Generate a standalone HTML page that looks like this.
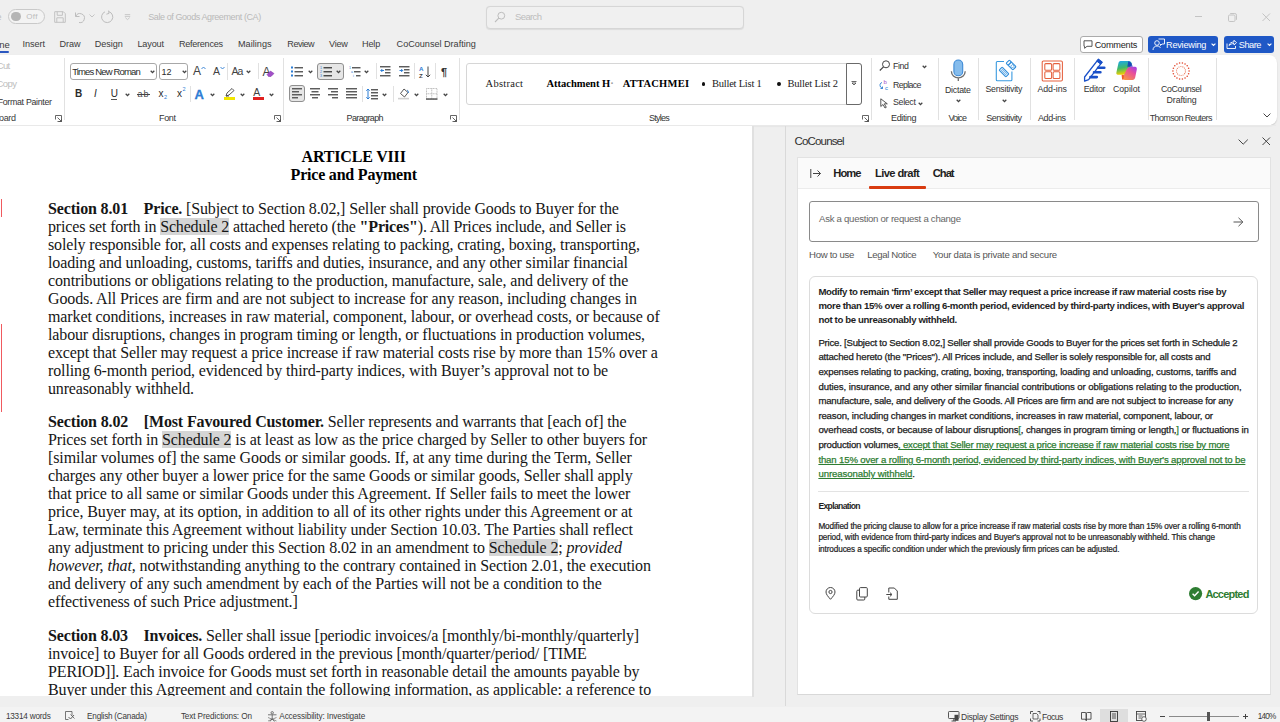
<!DOCTYPE html>
<html><head><meta charset="utf-8"><style>*{margin:0;padding:0;box-sizing:border-box}
html,body{width:1280px;height:722px;overflow:hidden;background:#efefef;font-family:"Liberation Sans",sans-serif;color:#242424;position:relative}
.a{position:absolute}
.t{position:absolute;white-space:nowrap;line-height:1}
svg.a{overflow:visible}
.hl{background:#d5d5d5}
</style></head><body>
<div class="a" style="left:0px;top:0px;width:1280px;height:55px;background:#efefef"></div>
<div class="t " style="left:-3.50px;top:12.98px;font-size:9.00px;color:#bdbdbd;">e</div>
<div class="a" style="left:7.5px;top:9px;width:37px;height:14.5px;border:1.2px solid #c9c9c9;border-radius:8px;background:#f3f3f3"></div>
<div class="a" style="left:11.3px;top:11.5px;width:9.8px;height:9.8px;border-radius:50%;background:#b5b5b5"></div>
<div class="t " style="letter-spacing:0.334px;left:26.30px;top:13.23px;font-size:8.00px;color:#bcbcbc;">Off</div>
<svg class="a" style="left:54px;top:11px;" width="12" height="12" viewBox="0 0 12 12"><path d="M.7 .7h8.6l2 2v8.6H.7z" fill="none" stroke="#c2c2c2" stroke-width="1"/><path d="M3.2 .7v3.6h5.2V.7M2.8 11.3V6.8h6.4v4.5" fill="none" stroke="#c2c2c2" stroke-width="1"/></svg>
<svg class="a" style="left:74px;top:11px;" width="12" height="12" viewBox="0 0 12 12"><path d="M1.5 1.5v4h4 M1.8 5.3A4.5 4.5 0 1 1 5 11.5" fill="none" stroke="#bdbdbd" stroke-width="1"/></svg>
<svg class="a" style="left:89px;top:14px;" width="6" height="4" viewBox="0 0 6 4"><path d="M.5 .5l2.5 2.5 2.5-2.5" fill="none" stroke="#c4c4c4" stroke-width="1"/></svg>
<svg class="a" style="left:100px;top:10px;" width="14" height="14" viewBox="0 0 14 14"><path d="M5 1.8A5.6 5.6 0 1 0 8.8 1.6" fill="none" stroke="#bdbdbd" stroke-width="1"/><path d="M8.6 .6l.4 2.8-2.6.8" fill="none" stroke="#bdbdbd" stroke-width="1"/></svg>
<svg class="a" style="left:124px;top:13.5px;" width="7" height="6" viewBox="0 0 7 6"><path d="M.8 .6h5.4M.8 2.4h5.4M1.3 3.6l2.2 2 2.2-2" fill="none" stroke="#c4c4c4" stroke-width=".9"/></svg>
<div class="t " style="letter-spacing:-0.410px;left:148.20px;top:12.98px;font-size:9.00px;color:#b9b9b9;">Sale of Goods Agreement (CA)</div>
<div class="a" style="left:485.5px;top:5.5px;width:258px;height:23px;border:1px solid #d6d6d6;border-radius:4px;background:#f0f0f0;box-shadow:0 .5px 1px rgba(0,0,0,.08)"></div>
<svg class="a" style="left:494px;top:10.5px;" width="12" height="12" viewBox="0 0 12 12"><circle cx="7.3" cy="4.7" r="3.4" fill="none" stroke="#bdbdbd" stroke-width="1"/><path d="M4.8 7.2L1 11" stroke="#bdbdbd" stroke-width="1.1"/></svg>
<div class="t " style="letter-spacing:-0.622px;left:515.00px;top:12.46px;font-size:9.50px;color:#bdbdbd;">Search</div>
<div class="a" style="left:1194.5px;top:16px;width:7.5px;height:1px;background:#c4c4c4"></div>
<svg class="a" style="left:1227.5px;top:12.5px;" width="9" height="9" viewBox="0 0 9 9"><rect x=".5" y="2" width="6.5" height="6.5" rx="1.2" fill="none" stroke="#c4c4c4"/><path d="M2.2 .5h4.6a1.7 1.7 0 0 1 1.7 1.7v4.6" fill="none" stroke="#c4c4c4"/></svg>
<svg class="a" style="left:1261.5px;top:12.5px;" width="8.5" height="8.5" viewBox="0 0 8.5 8.5"><path d="M.5 .5l7.5 7.5M8 .5L.5 8" stroke="#c4c4c4" stroke-width="1"/></svg>
<div class="t " style="letter-spacing:-0.050px;left:22.50px;top:40.10px;font-size:9.10px;color:#3b3b3b;">Insert</div>
<div class="t " style="letter-spacing:-0.078px;left:59.60px;top:40.10px;font-size:9.10px;color:#3b3b3b;">Draw</div>
<div class="t " style="letter-spacing:-0.042px;left:94.70px;top:40.10px;font-size:9.10px;color:#3b3b3b;">Design</div>
<div class="t " style="letter-spacing:-0.142px;left:137.40px;top:40.10px;font-size:9.10px;color:#3b3b3b;">Layout</div>
<div class="t " style="letter-spacing:-0.280px;left:179.00px;top:40.10px;font-size:9.10px;color:#3b3b3b;">References</div>
<div class="t " style="letter-spacing:0.034px;left:238.00px;top:40.10px;font-size:9.10px;color:#3b3b3b;">Mailings</div>
<div class="t " style="letter-spacing:-0.486px;left:287.30px;top:40.10px;font-size:9.10px;color:#3b3b3b;">Review</div>
<div class="t " style="letter-spacing:-0.249px;left:329.00px;top:40.10px;font-size:9.10px;color:#3b3b3b;">View</div>
<div class="t " style="letter-spacing:-0.134px;left:362.00px;top:40.10px;font-size:9.10px;color:#3b3b3b;">Help</div>
<div class="t " style="letter-spacing:-0.009px;left:396.60px;top:40.10px;font-size:9.10px;color:#3b3b3b;">CoCounsel Drafting</div>
<div class="t " style="left:-0.80px;top:39.76px;font-size:9.50px;color:#3b3b3b;">ne</div>
<div class="a" style="left:0px;top:51px;width:8.5px;height:2px;background:#2b57c0;border-radius:0 1px 1px 0"></div>
<div class="a" style="left:1079.5px;top:35.5px;width:63px;height:17px;border:1px solid #ababab;border-radius:3px;background:#fff"></div>
<svg class="a" style="left:1083px;top:40px;" width="10" height="9" viewBox="0 0 10 9"><path d="M1 .8h8v5.5H4L1.6 8.3V6.3H1z" fill="none" stroke="#444" stroke-width=".9"/></svg>
<div class="t " style="letter-spacing:-0.260px;left:1094.70px;top:40.81px;font-size:9.20px;color:#262626;">Comments</div>
<div class="a" style="left:1148.2px;top:35.5px;width:70px;height:17px;border-radius:3px;background:#1f58c6"></div>
<svg class="a" style="left:1151.5px;top:37.5px;" width="13" height="13" viewBox="0 0 13 13"><circle cx="5" cy="5" r="2.3" fill="none" stroke="#fff" stroke-width=".9"/><path d="M1 12c0-2.5 1.8-4 4-4s3 1 3.5 2M6.5 1h6v5H10l-1.5 1.5V6" fill="none" stroke="#fff" stroke-width=".9"/></svg>
<div class="t " style="letter-spacing:-0.249px;left:1166.00px;top:40.81px;font-size:9.20px;color:#fff;">Reviewing</div>
<svg class="a" style="left:1211px;top:43px;" width="5" height="3.5" viewBox="0 0 5 3.5"><path d="M.6 .6l1.9 1.9 1.9-1.9" fill="none" stroke="#fff" stroke-width="1.1"/></svg>
<div class="a" style="left:1224.1px;top:35.5px;width:49.5px;height:17px;border-radius:3px;background:#1f58c6"></div>
<svg class="a" style="left:1226px;top:39px;" width="11" height="10" viewBox="0 0 11 10"><path d="M1 4.5v5h8.5V7 M3 6.5c.5-2.5 2.5-3.5 5-3.5V1.2l2.5 2.5L8 6V4.5c-2 0-3.8.8-5 2z" fill="none" stroke="#fff" stroke-width=".9"/></svg>
<div class="t " style="letter-spacing:-0.483px;left:1238.80px;top:40.81px;font-size:9.20px;color:#fff;">Share</div>
<svg class="a" style="left:1266.8px;top:43px;" width="5" height="3.5" viewBox="0 0 5 3.5"><path d="M.6 .6l1.9 1.9 1.9-1.9" fill="none" stroke="#fff" stroke-width="1.1"/></svg>
<div class="a" style="left:-10px;top:55px;width:1286.5px;height:69.5px;background:#fff;border-radius:8px;box-shadow:0 1px 1.5px rgba(0,0,0,.16)"></div>
<div class="t " style="letter-spacing:-0.698px;left:-3.20px;top:61.46px;font-size:9.50px;color:#bdbdbd;">Cut</div>
<div class="t " style="letter-spacing:-0.562px;left:-3.50px;top:78.96px;font-size:9.50px;color:#bdbdbd;">Copy</div>
<div class="t " style="letter-spacing:-0.299px;left:-2.30px;top:98.45px;font-size:8.80px;color:#333333;">Format Painter</div>
<div class="t " style="letter-spacing:-0.383px;left:-6.50px;top:113.68px;font-size:9.00px;color:#3a3a3a;">Board</div>
<svg class="a" style="left:55px;top:114.5px;" width="7" height="7" viewBox="0 0 7 7"><path d="M.5 4.5V.5h6v6h-4 M2.5 2.5l4 4M4 6.5h2.5V4" fill="none" stroke="#555" stroke-width=".9"/></svg>
<div class="a" style="left:63.5px;top:58.4px;width:1px;height:62.00000000000001px;background:#e1e1e1"></div>
<div class="a" style="left:69.5px;top:63.3px;width:87.5px;height:16.5px;border:1px solid #a8a8a8;border-radius:3px;background:#fff"></div>
<div class="t " style="letter-spacing:-0.852px;left:72.20px;top:67.16px;font-size:9.50px;color:#2a2a2a;">Times New Roman</div>
<svg class="a" style="left:150.3px;top:70.3px;" width="5" height="4" viewBox="0 0 5 4"><path d="M.7 .8l1.8 1.9 1.8-1.9" fill="none" stroke="#444" stroke-width="1.25"/></svg>
<div class="a" style="left:159.2px;top:63.3px;width:29.3px;height:16.5px;border:1px solid #a8a8a8;border-radius:3px;background:#fff"></div>
<div class="t " style="left:161.50px;top:67.58px;font-size:9.00px;color:#2a2a2a;">12</div>
<svg class="a" style="left:181.8px;top:70.3px;" width="5" height="4" viewBox="0 0 5 4"><path d="M.7 .8l1.8 1.9 1.8-1.9" fill="none" stroke="#444" stroke-width="1.25"/></svg>
<div class="t " style="left:193.00px;top:65.14px;font-size:12.00px;color:#424242;">A</div>
<svg class="a" style="left:200.5px;top:66px;" width="5" height="4" viewBox="0 0 5 4"><path d="M.5 3l2-2 2 2" fill="none" stroke="#2b7cd3" stroke-width=".9"/></svg>
<div class="t " style="left:213.00px;top:66.41px;font-size:10.50px;color:#424242;">A</div>
<svg class="a" style="left:219.5px;top:66px;" width="5" height="4" viewBox="0 0 5 4"><path d="M.5 1l2 2 2-2" fill="none" stroke="#2b7cd3" stroke-width=".9"/></svg>
<div class="a" style="left:227px;top:63px;width:1px;height:17px;background:#e1e1e1"></div>
<div class="t " style="letter-spacing:-1.044px;left:231.60px;top:66.41px;font-size:10.50px;color:#424242;">Aa</div>
<svg class="a" style="left:246.0px;top:70.3px;" width="5" height="4" viewBox="0 0 5 4"><path d="M.7 .8l1.8 1.9 1.8-1.9" fill="none" stroke="#444" stroke-width="1.25"/></svg>
<div class="a" style="left:258.4px;top:63px;width:1px;height:16px;background:#e1e1e1"></div>
<div class="t " style="left:262.50px;top:65.64px;font-size:12.00px;color:#424242;">A</div>
<svg class="a" style="left:266px;top:70px;" width="9" height="7" viewBox="0 0 9 7"><path d="M1 4.5L4.5 1 8 3.5 5 6.5H2.5z" fill="#a24fc8" stroke="#7a2fa0" stroke-width=".5"/></svg>
<div class="t " style="left:75.00px;top:88.83px;font-size:10.00px;color:#2a2a2a;font-weight:bold;">B</div>
<div class="t " style="left:94.00px;top:88.83px;font-size:10.00px;color:#2a2a2a;font-style:italic;">I</div>
<div class="t " style="left:110.70px;top:88.83px;font-size:10.00px;color:#2a2a2a;">U</div>
<div class="a" style="left:110.7px;top:98.5px;width:6.5px;height:1px;background:#555"></div>
<svg class="a" style="left:125.0px;top:92.8px;" width="5" height="4" viewBox="0 0 5 4"><path d="M.7 .8l1.8 1.9 1.8-1.9" fill="none" stroke="#444" stroke-width="1.25"/></svg>
<div class="t " style="letter-spacing:0.984px;left:137.50px;top:89.68px;font-size:9.00px;color:#444;">ab</div>
<div class="a" style="left:136.5px;top:93.5px;width:13px;height:1px;background:#444"></div>
<div class="t " style="left:158.50px;top:88.83px;font-size:10.00px;color:#2a2a2a;">x</div>
<div class="t " style="left:164.00px;top:94.84px;font-size:5.50px;color:#2b7cd3;">2</div>
<div class="t " style="left:177.00px;top:88.83px;font-size:10.00px;color:#2a2a2a;">x</div>
<div class="t " style="left:182.50px;top:87.34px;font-size:5.50px;color:#2b7cd3;">2</div>
<div class="a" style="left:189.9px;top:85.6px;width:1px;height:16.0px;background:#e1e1e1"></div>
<div class="t " style="left:194.60px;top:87.80px;font-size:13.00px;color:#2f80d8;font-weight:bold;-webkit-text-stroke:.3px #1f6fc8;">A</div>
<svg class="a" style="left:209.5px;top:92.8px;" width="5" height="4" viewBox="0 0 5 4"><path d="M.7 .8l1.8 1.9 1.8-1.9" fill="none" stroke="#444" stroke-width="1.25"/></svg>
<svg class="a" style="left:223.5px;top:88px;" width="12" height="9" viewBox="0 0 12 9"><path d="M2 8l1-3 5-4.5 2 2L5 7z M2 8h3" fill="none" stroke="#444" stroke-width=".9"/></svg>
<div class="a" style="left:223.6px;top:96.9px;width:11.9px;height:2.8px;background:#f2e600"></div>
<svg class="a" style="left:240.3px;top:92.8px;" width="5" height="4" viewBox="0 0 5 4"><path d="M.7 .8l1.8 1.9 1.8-1.9" fill="none" stroke="#444" stroke-width="1.25"/></svg>
<div class="t " style="left:253.30px;top:87.11px;font-size:10.50px;color:#424242;">A</div>
<div class="a" style="left:252.8px;top:96.9px;width:11.2px;height:2.8px;background:#e02020"></div>
<svg class="a" style="left:269.3px;top:92.8px;" width="5" height="4" viewBox="0 0 5 4"><path d="M.7 .8l1.8 1.9 1.8-1.9" fill="none" stroke="#444" stroke-width="1.25"/></svg>
<div class="t " style="letter-spacing:-0.339px;left:159.00px;top:113.88px;font-size:9.00px;color:#333;">Font</div>
<svg class="a" style="left:274.2px;top:114.5px;" width="7" height="7" viewBox="0 0 7 7"><path d="M.5 4.5V.5h6v6h-4 M2.5 2.5l4 4M4 6.5h2.5V4" fill="none" stroke="#555" stroke-width=".9"/></svg>
<div class="a" style="left:282.5px;top:58.4px;width:1px;height:62.00000000000001px;background:#e1e1e1"></div>
<svg class="a" style="left:291px;top:66px;" width="12" height="11" viewBox="0 0 12 11"><rect x="0" y=".5" width="2" height="2" fill="#2b7cd3"/><rect x="0" y="4.5" width="2" height="2" fill="#2b7cd3"/><rect x="0" y="8.5" width="2" height="2" fill="#2b7cd3"/><rect x="3.5" y="1" width="8.5" height="1.45" fill="#5c5c5c"/><rect x="3.5" y="5" width="8.5" height="1.45" fill="#5c5c5c"/><rect x="3.5" y="9" width="8.5" height="1.45" fill="#5c5c5c"/></svg>
<svg class="a" style="left:308.3px;top:70.3px;" width="5" height="4" viewBox="0 0 5 4"><path d="M.7 .8l1.8 1.9 1.8-1.9" fill="none" stroke="#444" stroke-width="1.25"/></svg>
<div class="a" style="left:317px;top:63px;width:27.2px;height:17px;border:1px solid #8f8f8f;border-radius:3px;background:#e6e6e6"></div>
<svg class="a" style="left:319.5px;top:66px;" width="12" height="11" viewBox="0 0 12 11"><text x="0" y="3" font-size="3.6" fill="#2b7cd3" font-family="Liberation Sans">1</text><text x="0" y="7" font-size="3.6" fill="#2b7cd3" font-family="Liberation Sans">2</text><text x="0" y="11" font-size="3.6" fill="#2b7cd3" font-family="Liberation Sans">3</text><rect x="3.5" y="1" width="8.5" height="1.45" fill="#4a4a4a"/><rect x="3.5" y="5" width="8.5" height="1.45" fill="#4a4a4a"/><rect x="3.5" y="9" width="8.5" height="1.45" fill="#4a4a4a"/></svg>
<svg class="a" style="left:336.1px;top:70.3px;" width="5" height="4" viewBox="0 0 5 4"><path d="M.7 .8l1.8 1.9 1.8-1.9" fill="none" stroke="#444" stroke-width="1.25"/></svg>
<svg class="a" style="left:348.5px;top:66px;" width="12" height="11" viewBox="0 0 12 11"><text x="0" y="3" font-size="3.6" fill="#2b7cd3" font-family="Liberation Sans">1</text><text x="2" y="7" font-size="3.6" fill="#2b7cd3" font-family="Liberation Sans">a</text><text x="4" y="11" font-size="3.6" fill="#2b7cd3" font-family="Liberation Sans">i</text><rect x="3" y="1" width="8.5" height="1.45" fill="#5c5c5c"/><rect x="5" y="5" width="6.5" height="1.45" fill="#5c5c5c"/><rect x="7" y="9" width="4.5" height="1.45" fill="#5c5c5c"/></svg>
<svg class="a" style="left:364.3px;top:70.3px;" width="5" height="4" viewBox="0 0 5 4"><path d="M.7 .8l1.8 1.9 1.8-1.9" fill="none" stroke="#444" stroke-width="1.25"/></svg>
<div class="a" style="left:375.7px;top:63px;width:1px;height:16px;background:#e1e1e1"></div>
<svg class="a" style="left:380.4px;top:66px;" width="11" height="10" viewBox="0 0 11 10"><rect x="0" y="0" width="10.5" height="1.45" fill="#5c5c5c"/><rect x="5" y="3" width="5.5" height="1.45" fill="#5c5c5c"/><rect x="5" y="6" width="5.5" height="1.45" fill="#5c5c5c"/><rect x="0" y="9" width="10.5" height="1.45" fill="#5c5c5c"/><path d="M4 4.5H.8M2.3 3L.8 4.5 2.3 6" fill="none" stroke="#2b7cd3" stroke-width="1"/></svg>
<svg class="a" style="left:398.6px;top:66px;" width="11" height="10" viewBox="0 0 11 10"><rect x="0" y="0" width="10.5" height="1.45" fill="#5c5c5c"/><rect x="5" y="3" width="5.5" height="1.45" fill="#5c5c5c"/><rect x="5" y="6" width="5.5" height="1.45" fill="#5c5c5c"/><rect x="0" y="9" width="10.5" height="1.45" fill="#5c5c5c"/><path d="M.5 4.5h3.2M2.2 3l1.5 1.5L2.2 6" fill="none" stroke="#2b7cd3" stroke-width="1"/></svg>
<div class="a" style="left:414px;top:63px;width:1px;height:16px;background:#e1e1e1"></div>
<svg class="a" style="left:418.5px;top:65.5px;" width="12" height="12" viewBox="0 0 12 12"><text x="0" y="5.2" font-size="6.2" font-weight="bold" fill="#2b7cd3" font-family="Liberation Sans">A</text><text x="0" y="11.8" font-size="6.2" font-weight="bold" fill="#444" font-family="Liberation Sans">Z</text><path d="M9 .5v10.5M6.8 8.8L9 11l2.2-2.2" fill="none" stroke="#444" stroke-width="1"/></svg>
<div class="a" style="left:434.8px;top:63px;width:1px;height:16px;background:#e1e1e1"></div>
<div class="t " style="left:441.00px;top:66.69px;font-size:11.00px;color:#333;font-weight:bold;">¶</div>
<div class="a" style="left:288.5px;top:85.3px;width:16.3px;height:17.2px;border:1px solid #8f8f8f;border-radius:3px;background:#e6e6e6"></div>
<svg class="a" style="left:291.8px;top:87.8px;" width="10.5" height="11" viewBox="0 0 10.5 11"><rect x="0" y="0" width="10" height="1.45" fill="#5c5c5c"/><rect x="0" y="3" width="7" height="1.45" fill="#5c5c5c"/><rect x="0" y="6" width="10" height="1.45" fill="#5c5c5c"/><rect x="0" y="9" width="6" height="1.45" fill="#5c5c5c"/></svg>
<svg class="a" style="left:309.7px;top:87.8px;" width="10.5" height="11" viewBox="0 0 10.5 11"><rect x="0" y="0" width="10" height="1.45" fill="#5c5c5c"/><rect x="1.5" y="3" width="7" height="1.45" fill="#5c5c5c"/><rect x="0" y="6" width="10" height="1.45" fill="#5c5c5c"/><rect x="2" y="9" width="6" height="1.45" fill="#5c5c5c"/></svg>
<svg class="a" style="left:327.9px;top:87.8px;" width="10.5" height="11" viewBox="0 0 10.5 11"><rect x="0" y="0" width="10" height="1.45" fill="#5c5c5c"/><rect x="3" y="3" width="7" height="1.45" fill="#5c5c5c"/><rect x="0" y="6" width="10" height="1.45" fill="#5c5c5c"/><rect x="4" y="9" width="6" height="1.45" fill="#5c5c5c"/></svg>
<svg class="a" style="left:345.5px;top:87.8px;" width="11" height="11" viewBox="0 0 11 11"><rect x="0" y="0" width="11" height="1.45" fill="#5c5c5c"/><rect x="0" y="3" width="11" height="1.45" fill="#5c5c5c"/><rect x="0" y="6" width="11" height="1.45" fill="#5c5c5c"/><rect x="0" y="9" width="11" height="1.45" fill="#5c5c5c"/></svg>
<div class="a" style="left:361.6px;top:85.5px;width:1px;height:16.5px;background:#e1e1e1"></div>
<svg class="a" style="left:366px;top:87.5px;" width="12" height="12" viewBox="0 0 12 12"><path d="M2 1v10M.3 2.7L2 1l1.7 1.7M.3 9.3L2 11l1.7-1.7" fill="none" stroke="#2b7cd3" stroke-width="1"/><rect x="5" y="1" width="7" height="1.45" fill="#5c5c5c"/><rect x="5" y="4" width="7" height="1.45" fill="#5c5c5c"/><rect x="5" y="7" width="7" height="1.45" fill="#5c5c5c"/><rect x="5" y="10" width="7" height="1.45" fill="#5c5c5c"/></svg>
<svg class="a" style="left:381.5px;top:92.8px;" width="5" height="4" viewBox="0 0 5 4"><path d="M.7 .8l1.8 1.9 1.8-1.9" fill="none" stroke="#444" stroke-width="1.25"/></svg>
<div class="a" style="left:393px;top:86px;width:1px;height:16px;background:#e1e1e1"></div>
<svg class="a" style="left:397.8px;top:87px;" width="12" height="13" viewBox="0 0 12 13"><path d="M2.5 6.5L6 2l4 3.5-3.5 4.5z" fill="none" stroke="#444" stroke-width=".9"/><path d="M9 3c1 .5 1.5 1.5 1.3 3" fill="none" stroke="#2b7cd3" stroke-width="1"/><rect x="0" y="10.8" width="11" height="1.6" fill="#d0d0d0"/></svg>
<svg class="a" style="left:414.3px;top:92.8px;" width="5" height="4" viewBox="0 0 5 4"><path d="M.7 .8l1.8 1.9 1.8-1.9" fill="none" stroke="#444" stroke-width="1.25"/></svg>
<svg class="a" style="left:426.4px;top:87.5px;" width="11.5" height="12" viewBox="0 0 11.5 12"><rect x=".5" y=".5" width="10.5" height="10.5" fill="none" stroke="#aaa" stroke-width=".8" stroke-dasharray="1 .6"/><path d="M5.75 .5v10.5M.5 5.75h10.5" stroke="#aaa" stroke-width=".8" stroke-dasharray="1 .6"/><rect x="0" y="10.4" width="11.5" height="1.3" fill="#444"/></svg>
<svg class="a" style="left:443.1px;top:92.8px;" width="5" height="4" viewBox="0 0 5 4"><path d="M.7 .8l1.8 1.9 1.8-1.9" fill="none" stroke="#444" stroke-width="1.25"/></svg>
<div class="t " style="letter-spacing:-0.629px;left:346.60px;top:113.88px;font-size:9.00px;color:#333;">Paragraph</div>
<svg class="a" style="left:449.8px;top:114.5px;" width="7" height="7" viewBox="0 0 7 7"><path d="M.5 4.5V.5h6v6h-4 M2.5 2.5l4 4M4 6.5h2.5V4" fill="none" stroke="#555" stroke-width=".9"/></svg>
<div class="a" style="left:459px;top:58.4px;width:1px;height:62.00000000000001px;background:#e1e1e1"></div>
<div class="a" style="left:465.8px;top:63px;width:396.5px;height:41.8px;border:1px solid #d6d6d6;border-radius:3px;background:#fff"></div>
<div class="t " style="letter-spacing:0.260px;left:485.60px;top:78.71px;font-size:10.50px;color:#1a1a1a;font-family:'Liberation Serif',serif;">Abstract</div>
<div class="t " style="letter-spacing:-0.016px;left:546.50px;top:78.71px;font-size:10.50px;color:#000;font-family:'Liberation Serif',serif;font-weight:bold;">Attachment H<span style="color:#999">·</span></div>
<div class="t " style="letter-spacing:0.241px;left:622.70px;top:78.71px;font-size:10.50px;color:#000;font-family:'Liberation Serif',serif;font-weight:bold;">ATTACHMEI</div>
<div class="a" style="left:701.6px;top:82.4px;width:3.8px;height:3.8px;border-radius:50%;background:#111"></div>
<div class="t " style="letter-spacing:-0.233px;left:712.00px;top:78.71px;font-size:10.50px;color:#1a1a1a;font-family:'Liberation Serif',serif;">Bullet List 1</div>
<div class="a" style="left:777px;top:82.4px;width:3.8px;height:3.8px;border-radius:50%;background:#111"></div>
<div class="t " style="letter-spacing:-0.158px;left:787.40px;top:78.71px;font-size:10.50px;color:#1a1a1a;font-family:'Liberation Serif',serif;">Bullet List 2</div>
<div class="a" style="left:846px;top:63px;width:16.3px;height:41.8px;border:1px solid #6a6a6a;border-radius:0 3px 3px 0;background:#fff"></div>
<svg class="a" style="left:850.5px;top:81px;" width="6" height="5" viewBox="0 0 6 5"><path d="M.5 .5h5M1 2l2 2 2-2z" fill="none" stroke="#444" stroke-width=".8"/></svg>
<div class="t " style="letter-spacing:-0.743px;left:649.00px;top:113.88px;font-size:9.00px;color:#333;">Styles</div>
<svg class="a" style="left:862px;top:114.5px;" width="7" height="7" viewBox="0 0 7 7"><path d="M.5 4.5V.5h6v6h-4 M2.5 2.5l4 4M4 6.5h2.5V4" fill="none" stroke="#555" stroke-width=".9"/></svg>
<div class="a" style="left:870.7px;top:58.4px;width:1px;height:62.00000000000001px;background:#e1e1e1"></div>
<svg class="a" style="left:879.3px;top:60.3px;" width="11.5" height="11" viewBox="0 0 11.5 11"><circle cx="7" cy="4.3" r="3.5" fill="none" stroke="#444" stroke-width="1"/><path d="M4.5 6.8L.8 10.5" stroke="#444" stroke-width="1.2"/></svg>
<div class="t " style="letter-spacing:-0.375px;left:893.00px;top:62.35px;font-size:8.80px;color:#333333;">Find</div>
<svg class="a" style="left:921.7px;top:65.3px;" width="5" height="4" viewBox="0 0 5 4"><path d="M.7 .8l1.8 1.9 1.8-1.9" fill="none" stroke="#444" stroke-width="1.25"/></svg>
<svg class="a" style="left:878.6px;top:78.5px;" width="11" height="12" viewBox="0 0 11 12"><text x="4.5" y="5" font-size="6" fill="#a24fc8" font-family="Liberation Sans">b</text><text x="6" y="11" font-size="6" fill="#2b7cd3" font-family="Liberation Sans">c</text><path d="M3 3.5C1 4 .5 6 1.5 8l2 1.5M1.5 9.5h2V7.5" fill="none" stroke="#2b7cd3" stroke-width=".9"/></svg>
<div class="t " style="letter-spacing:-0.630px;left:893.00px;top:80.75px;font-size:8.80px;color:#333333;">Replace</div>
<svg class="a" style="left:879.8px;top:98px;" width="8.5" height="10" viewBox="0 0 8.5 10"><path d="M.8 .8l6.5 5H4.3l2 3.5-1.3.7-2-3.5-2.2 2z" fill="none" stroke="#444" stroke-width=".9"/></svg>
<div class="t " style="letter-spacing:-0.311px;left:893.00px;top:98.45px;font-size:8.80px;color:#333333;">Select</div>
<svg class="a" style="left:917.5px;top:101.8px;" width="5" height="4" viewBox="0 0 5 4"><path d="M.7 .8l1.8 1.9 1.8-1.9" fill="none" stroke="#444" stroke-width="1.25"/></svg>
<div class="t " style="letter-spacing:-0.355px;left:891.00px;top:113.88px;font-size:9.00px;color:#333;">Editing</div>
<div class="a" style="left:937.7px;top:58.4px;width:1px;height:62.00000000000001px;background:#e1e1e1"></div>
<svg class="a" style="left:950px;top:59px;" width="16" height="23" viewBox="0 0 16 23"><rect x="3.9" y="1" width="8.8" height="15.8" rx="4.4" fill="#85bcec" stroke="#3d8ad6" stroke-width="1.1"/><path d="M1.4 12.3a6.9 6.6 0 0 0 13.8 0M8.3 18.8v3.2" fill="none" stroke="#6e6e6e" stroke-width="1.3"/></svg>
<div class="t " style="letter-spacing:-0.248px;left:945.00px;top:85.85px;font-size:8.80px;color:#333333;">Dictate</div>
<svg class="a" style="left:955.5px;top:99.3px;" width="5" height="4" viewBox="0 0 5 4"><path d="M.7 .8l1.8 1.9 1.8-1.9" fill="none" stroke="#444" stroke-width="1.25"/></svg>
<div class="t " style="letter-spacing:-0.883px;left:948.50px;top:113.88px;font-size:9.00px;color:#333;">Voice</div>
<div class="a" style="left:978px;top:58.4px;width:1px;height:62.00000000000001px;background:#e1e1e1"></div>
<svg class="a" style="left:995px;top:59px;" width="22" height="23" viewBox="0 0 22 23"><path d="M9 2.5H2.3a1 1 0 0 0-1 1V20.7a1 1 0 0 0 1 1h13.6a1 1 0 0 0 1-1V12.5" fill="#fff" stroke="#3a9ae0" stroke-width="1.1"/><g transform="rotate(45 9 13)"><rect x="4.2" y="10.8" width="9.6" height="4.4" rx=".8" fill="#d8ebfa" stroke="#2f8ddb" stroke-width="1"/><path d="M5.5 12.3h7M5.5 13.7h7" stroke="#2f8ddb" stroke-width=".5"/></g><g transform="rotate(45 16 6)"><rect x="11.3" y="3.6" width="9.5" height="4.6" rx=".8" fill="#fff" stroke="#2f8ddb" stroke-width="1.1"/><path d="M14.2 3.6v4.6" stroke="#2f8ddb" stroke-width="1.3"/><rect x="16.6" y="4.7" width="2.6" height="2.4" fill="none" stroke="#2f8ddb" stroke-width=".7"/></g></svg>
<div class="t " style="letter-spacing:-0.271px;left:985.50px;top:85.15px;font-size:8.80px;color:#333333;">Sensitivity</div>
<svg class="a" style="left:1002.0px;top:99.3px;" width="5" height="4" viewBox="0 0 5 4"><path d="M.7 .8l1.8 1.9 1.8-1.9" fill="none" stroke="#444" stroke-width="1.25"/></svg>
<div class="t " style="letter-spacing:-0.482px;left:986.30px;top:113.88px;font-size:9.00px;color:#333;">Sensitivity</div>
<div class="a" style="left:1030.2px;top:58.4px;width:1px;height:62.00000000000001px;background:#e1e1e1"></div>
<svg class="a" style="left:1041px;top:60px;" width="22.5" height="22" viewBox="0 0 22.5 22"><rect x="1.2" y="1" width="20.2" height="20" rx="1.3" fill="none" stroke="#e5603e" stroke-width="1.05"/><rect x="3.8" y="3.6" width="6.8" height="6.6" rx="1" fill="none" stroke="#e5603e" stroke-width="1.05"/><rect x="12.1" y="3.6" width="6.8" height="6.6" rx="1" fill="none" stroke="#e5603e" stroke-width="1.05"/><rect x="3.8" y="11.8" width="6.8" height="6.6" rx="1" fill="none" stroke="#e5603e" stroke-width="1.05"/><rect x="12.1" y="11.8" width="6.8" height="6.6" rx="1" fill="none" stroke="#e5603e" stroke-width="1.05"/></svg>
<div class="t " style="letter-spacing:-0.038px;left:1037.40px;top:85.15px;font-size:8.80px;color:#333333;">Add-ins</div>
<div class="t " style="letter-spacing:-0.419px;left:1038.00px;top:113.88px;font-size:9.00px;color:#333;">Add-ins</div>
<div class="a" style="left:1074.4px;top:58.4px;width:1px;height:62.00000000000001px;background:#e1e1e1"></div>
<svg class="a" style="left:1080px;top:56px;" width="28" height="28" viewBox="0 0 28 28"><path d="M18.3 3.3L22.1 6.2 8.6 23.6 4.6 25.2 4.6 21z" fill="#fff" stroke="#1a50c8" stroke-width="1.3" stroke-linejoin="round"/><path d="M18.3 3.3L22.1 6.2 20.6 8.1 16.8 5.2z" fill="#1a50c8" stroke="#1a50c8" stroke-width="1"/><path d="M18.1 11.7h6.2M14 16.3h6.4M10.4 21.1h6.4" stroke="#1a50c8" stroke-width="2.6" stroke-linecap="round"/></svg>
<div class="t " style="letter-spacing:-0.237px;left:1083.70px;top:85.25px;font-size:8.80px;color:#333333;">Editor</div>
<svg class="a" style="left:1080px;top:56px;" width="65" height="28" viewBox="0 0 65 28"><defs><linearGradient id="cg1" x1="0" y1="0" x2=".2" y2="1"><stop offset="0" stop-color="#1aa6f0"/><stop offset=".55" stop-color="#3fb96a"/><stop offset="1" stop-color="#f0d000"/></linearGradient><linearGradient id="cg2" x1="1" y1="0" x2=".3" y2="1"><stop offset="0" stop-color="#9a3ef0"/><stop offset=".45" stop-color="#e9509a"/><stop offset="1" stop-color="#f7904a"/></linearGradient></defs><path d="M40.5 5H48.5C50.5 5 51.5 6.2 52 8L47.5 15.5C46.3 17.8 45 18.8 42.5 18.8H37.8C36.6 18.8 36.1 17.9 36.4 16.6L38.3 7.8C38.7 6 39.4 5 40.5 5Z" fill="url(#cg1)"/><path d="M48.3 5.2C50 5.4 51.2 6.5 51.8 8.2L52.8 10.8H47.3z" fill="#1030c0" opacity=".8"/><path d="M45.2 24H52.5C54 24 54.8 23.1 55.2 21.6L56.8 13.5C57.1 12 56.4 10.8 55 10.8H50.6C48.6 10.8 47.5 11.9 46.6 13.8L42.7 21.3C42.1 22.8 43 24 45.2 24Z" fill="url(#cg2)"/><path d="M42.5 18.8C43.6 18.8 44.2 19.2 43.9 20.2L43.4 22.8C43.2 23.6 42.8 24 42.2 23.6L41.6 19.5C41.5 19 41.8 18.8 42.5 18.8z" fill="#f05a28"/></svg>
<div class="t " style="letter-spacing:-0.065px;left:1113.00px;top:85.25px;font-size:8.80px;color:#333333;">Copilot</div>
<div class="a" style="left:1147.7px;top:58.4px;width:1px;height:62.00000000000001px;background:#e1e1e1"></div>
<svg class="a" style="left:1171.1px;top:60.8px;" width="20" height="20" viewBox="0 0 20 20"><circle cx="18.10" cy="10.00" r=".8" fill="#e2462c"/><circle cx="17.61" cy="12.77" r=".8" fill="#e2462c"/><circle cx="16.20" cy="15.21" r=".8" fill="#e2462c"/><circle cx="14.05" cy="17.01" r=".8" fill="#e2462c"/><circle cx="11.41" cy="17.98" r=".8" fill="#e2462c"/><circle cx="8.59" cy="17.98" r=".8" fill="#e2462c"/><circle cx="5.95" cy="17.01" r=".8" fill="#e2462c"/><circle cx="3.80" cy="15.21" r=".8" fill="#e2462c"/><circle cx="2.39" cy="12.77" r=".8" fill="#e2462c"/><circle cx="1.90" cy="10.00" r=".8" fill="#e2462c"/><circle cx="2.39" cy="7.23" r=".8" fill="#e2462c"/><circle cx="3.80" cy="4.79" r=".8" fill="#e2462c"/><circle cx="5.95" cy="2.99" r=".8" fill="#e2462c"/><circle cx="8.59" cy="2.02" r=".8" fill="#e2462c"/><circle cx="11.41" cy="2.02" r=".8" fill="#e2462c"/><circle cx="14.05" cy="2.99" r=".8" fill="#e2462c"/><circle cx="16.20" cy="4.79" r=".8" fill="#e2462c"/><circle cx="17.61" cy="7.23" r=".8" fill="#e2462c"/><circle cx="14.41" cy="10.89" r=".6" fill="#ea7658"/><circle cx="13.59" cy="12.72" r=".6" fill="#ea7658"/><circle cx="12.05" cy="14.01" r=".6" fill="#ea7658"/><circle cx="10.11" cy="14.50" r=".6" fill="#ea7658"/><circle cx="8.15" cy="14.10" r=".6" fill="#ea7658"/><circle cx="6.55" cy="12.89" r=".6" fill="#ea7658"/><circle cx="5.64" cy="11.11" r=".6" fill="#ea7658"/><circle cx="5.59" cy="9.11" r=".6" fill="#ea7658"/><circle cx="6.41" cy="7.28" r=".6" fill="#ea7658"/><circle cx="7.95" cy="5.99" r=".6" fill="#ea7658"/><circle cx="9.89" cy="5.50" r=".6" fill="#ea7658"/><circle cx="11.85" cy="5.90" r=".6" fill="#ea7658"/><circle cx="13.45" cy="7.11" r=".6" fill="#ea7658"/><circle cx="14.36" cy="8.89" r=".6" fill="#ea7658"/></svg>
<div class="t " style="letter-spacing:-0.341px;left:1161.00px;top:85.25px;font-size:8.80px;color:#333333;">CoCounsel</div>
<div class="t " style="letter-spacing:-0.116px;left:1166.60px;top:96.45px;font-size:8.80px;color:#333333;">Drafting</div>
<div class="t " style="letter-spacing:-0.624px;left:1149.70px;top:113.78px;font-size:9.00px;color:#3a3a3a;">Thomson Reuters</div>
<div class="a" style="left:1215.5px;top:58.4px;width:1px;height:62.00000000000001px;background:#e1e1e1"></div>
<svg class="a" style="left:1262.5px;top:113px;" width="8" height="5" viewBox="0 0 8 5"><path d="M.6 .6l3.4 3.4 3.4-3.4" fill="none" stroke="#444" stroke-width="1"/></svg>
<div class="a" style="left:0px;top:125px;width:752px;height:571px;background:#fff"></div>
<div class="t " style="letter-spacing:-0.182px;left:301.60px;top:148.80px;font-size:16.00px;color:#000;font-family:'Liberation Serif',serif;font-weight:bold;">ARTICLE VIII</div>
<div class="t " style="letter-spacing:-0.209px;left:290.60px;top:166.80px;font-size:16.00px;color:#000;font-family:'Liberation Serif',serif;font-weight:bold;">Price and Payment</div>
<div class="t dl" style="letter-spacing:-0.149px;left:48.00px;top:200.90px;font-size:16.00px;color:#161616;font-family:'Liberation Serif',serif;"><b>Section 8.01</b><span style="display:inline-block;width:15.6px"></span><b>Price.</b> [Subject to Section 8.02,] Seller shall provide Goods to Buyer for the</div>
<div class="t dl" style="letter-spacing:-0.168px;left:48.00px;top:218.92px;font-size:16.00px;color:#161616;font-family:'Liberation Serif',serif;">prices set forth in <span class="hl">Schedule 2</span> attached hereto (the <b>"Prices"</b>). All Prices include, and Seller is</div>
<div class="t dl" style="letter-spacing:-0.126px;left:48.00px;top:236.94px;font-size:16.00px;color:#161616;font-family:'Liberation Serif',serif;">solely responsible for, all costs and expenses relating to packing, crating, boxing, transporting,</div>
<div class="t dl" style="letter-spacing:-0.124px;left:48.00px;top:254.96px;font-size:16.00px;color:#161616;font-family:'Liberation Serif',serif;">loading and unloading, customs, tariffs and duties, insurance, and any other similar financial</div>
<div class="t dl" style="letter-spacing:-0.127px;left:48.00px;top:272.98px;font-size:16.00px;color:#161616;font-family:'Liberation Serif',serif;">contributions or obligations relating to the production, manufacture, sale, and delivery of the</div>
<div class="t dl" style="letter-spacing:-0.125px;left:48.00px;top:291.00px;font-size:16.00px;color:#161616;font-family:'Liberation Serif',serif;">Goods. All Prices are firm and are not subject to increase for any reason, including changes in</div>
<div class="t dl" style="letter-spacing:-0.119px;left:48.00px;top:309.02px;font-size:16.00px;color:#161616;font-family:'Liberation Serif',serif;">market conditions, increases in raw material, component, labour, or overhead costs, or because of</div>
<div class="t dl" style="letter-spacing:-0.139px;left:48.00px;top:327.04px;font-size:16.00px;color:#161616;font-family:'Liberation Serif',serif;">labour disruptions, changes in program timing or length, or fluctuations in production volumes,</div>
<div class="t dl" style="letter-spacing:-0.134px;left:48.00px;top:345.06px;font-size:16.00px;color:#161616;font-family:'Liberation Serif',serif;">except that Seller may request a price increase if raw material costs rise by more than 15% over a</div>
<div class="t dl" style="letter-spacing:-0.125px;left:48.00px;top:363.08px;font-size:16.00px;color:#161616;font-family:'Liberation Serif',serif;">rolling 6-month period, evidenced by third-party indices, with Buyer’s approval not to be</div>
<div class="t dl" style="letter-spacing:-0.155px;left:48.00px;top:381.10px;font-size:16.00px;color:#161616;font-family:'Liberation Serif',serif;">unreasonably withheld.</div>
<div class="t dl" style="letter-spacing:-0.137px;left:48.00px;top:414.10px;font-size:16.00px;color:#161616;font-family:'Liberation Serif',serif;"><b>Section 8.02</b><span style="display:inline-block;width:15.6px"></span><b>[Most Favoured Customer.</b> Seller represents and warrants that [each of] the</div>
<div class="t dl" style="letter-spacing:-0.121px;left:48.00px;top:432.10px;font-size:16.00px;color:#161616;font-family:'Liberation Serif',serif;">Prices set forth in <span class="hl">Schedule 2</span> is at least as low as the price charged by Seller to other buyers for</div>
<div class="t dl" style="letter-spacing:-0.115px;left:48.00px;top:450.10px;font-size:16.00px;color:#161616;font-family:'Liberation Serif',serif;">[similar volumes of] the same Goods or similar goods. If, at any time during the Term, Seller</div>
<div class="t dl" style="letter-spacing:-0.128px;left:48.00px;top:468.10px;font-size:16.00px;color:#161616;font-family:'Liberation Serif',serif;">charges any other buyer a lower price for the same Goods or similar goods, Seller shall apply</div>
<div class="t dl" style="letter-spacing:-0.120px;left:48.00px;top:486.10px;font-size:16.00px;color:#161616;font-family:'Liberation Serif',serif;">that price to all same or similar Goods under this Agreement. If Seller fails to meet the lower</div>
<div class="t dl" style="letter-spacing:-0.106px;left:48.00px;top:504.10px;font-size:16.00px;color:#161616;font-family:'Liberation Serif',serif;">price, Buyer may, at its option, in addition to all of its other rights under this Agreement or at</div>
<div class="t dl" style="letter-spacing:-0.112px;left:48.00px;top:522.10px;font-size:16.00px;color:#161616;font-family:'Liberation Serif',serif;">Law, terminate this Agreement without liability under Section 10.03. The Parties shall reflect</div>
<div class="t dl" style="letter-spacing:-0.122px;left:48.00px;top:540.10px;font-size:16.00px;color:#161616;font-family:'Liberation Serif',serif;">any adjustment to pricing under this Section 8.02 in an amendment to <span class="hl">Schedule 2</span>; <i>provided</i></div>
<div class="t dl" style="letter-spacing:-0.117px;left:48.00px;top:558.10px;font-size:16.00px;color:#161616;font-family:'Liberation Serif',serif;"><i>however, that</i>, notwithstanding anything to the contrary contained in Section 2.01, the execution</div>
<div class="t dl" style="letter-spacing:-0.136px;left:48.00px;top:576.10px;font-size:16.00px;color:#161616;font-family:'Liberation Serif',serif;">and delivery of any such amendment by each of the Parties will not be a condition to the</div>
<div class="t dl" style="letter-spacing:-0.115px;left:48.00px;top:594.10px;font-size:16.00px;color:#161616;font-family:'Liberation Serif',serif;">effectiveness of such Price adjustment.]</div>
<div class="t dl" style="letter-spacing:-0.155px;left:48.00px;top:628.00px;font-size:16.00px;color:#161616;font-family:'Liberation Serif',serif;"><b>Section 8.03</b><span style="display:inline-block;width:15.6px"></span><b>Invoices.</b> Seller shall issue [periodic invoices/a [monthly/bi-monthly/quarterly]</div>
<div class="t dl" style="letter-spacing:-0.140px;left:48.00px;top:646.00px;font-size:16.00px;color:#161616;font-family:'Liberation Serif',serif;">invoice] to Buyer for all Goods ordered in the previous [month/quarter/period/ [TIME</div>
<div class="t dl" style="letter-spacing:-0.137px;left:48.00px;top:664.00px;font-size:16.00px;color:#161616;font-family:'Liberation Serif',serif;">PERIOD]]. Each invoice for Goods must set forth in reasonable detail the amounts payable by</div>
<div class="t dl" style="letter-spacing:-0.125px;left:48.00px;top:682.00px;font-size:16.00px;color:#161616;font-family:'Liberation Serif',serif;">Buyer under this Agreement and contain the following information, as applicable: a reference to</div>
<div class="a" style="left:0.5px;top:199px;width:1.4px;height:17.5px;background:#f05a5e"></div>
<div class="a" style="left:0.5px;top:324.4px;width:1.4px;height:88px;background:#f05a5e"></div>
<div class="a" style="left:752px;top:125px;width:2px;height:572px;background:#e0e0e0"></div>
<div class="a" style="left:785px;top:125px;width:1px;height:581px;background:#d9d9d9"></div>
<div class="t " style="letter-spacing:-0.851px;left:794.60px;top:135.87px;font-size:11.50px;color:#303030;">CoCounsel</div>
<svg class="a" style="left:1237.5px;top:138.5px;" width="10.5" height="6" viewBox="0 0 10.5 6"><path d="M.6 .6l4.6 4.6 4.6-4.6" fill="none" stroke="#444" stroke-width="1"/></svg>
<svg class="a" style="left:1261.5px;top:137px;" width="8.5" height="8.5" viewBox="0 0 8.5 8.5"><path d="M.5 .5l7.5 7.5M8 .5L.5 8" stroke="#444" stroke-width="1"/></svg>
<div class="a" style="left:797px;top:157px;width:473.5px;height:538px;background:#fff;border:1px solid #e2e2e2;border-bottom:1.5px solid #d8d8d8"></div>
<div class="a" style="left:798px;top:158px;width:471.5px;height:31px;background:#fafafa;border-bottom:1px solid #ececec"></div>
<svg class="a" style="left:809.5px;top:168.5px;" width="12" height="9" viewBox="0 0 12 9"><path d="M.8 0v9" stroke="#444" stroke-width="1"/><path d="M3 4.5h7.5M7.5 1.5l3 3-3 3" fill="none" stroke="#444" stroke-width="1"/></svg>
<div class="t " style="letter-spacing:-0.931px;left:833.30px;top:167.82px;font-size:11.20px;color:#1e1e1e;font-weight:bold;">Home</div>
<div class="t " style="letter-spacing:-0.618px;left:875.00px;top:167.82px;font-size:11.20px;color:#1e1e1e;font-weight:bold;">Live draft</div>
<div class="t " style="letter-spacing:-1.025px;left:932.80px;top:167.82px;font-size:11.20px;color:#1e1e1e;font-weight:bold;">Chat</div>
<div class="a" style="left:868.5px;top:186px;width:57.5px;height:3px;background:#d83b10;border-radius:1px"></div>
<div class="a" style="left:809px;top:200.7px;width:449.5px;height:41.7px;border:1px solid #8a8a8a;border-radius:3px;background:#fff"></div>
<div class="t " style="letter-spacing:-0.271px;left:819.00px;top:214.47px;font-size:9.60px;color:#666;">Ask a question or request a change</div>
<svg class="a" style="left:1233px;top:216.5px;" width="11" height="10" viewBox="0 0 11 10"><path d="M.5 5h9.5M5.5 .8L9.8 5 5.5 9.2" fill="none" stroke="#555" stroke-width="1"/></svg>
<div class="t " style="letter-spacing:-0.300px;left:809.00px;top:250.47px;font-size:9.60px;color:#555;">How to use</div>
<div class="t " style="letter-spacing:-0.359px;left:867.30px;top:250.47px;font-size:9.60px;color:#555;">Legal Notice</div>
<div class="t " style="letter-spacing:-0.251px;left:932.80px;top:250.47px;font-size:9.60px;color:#555;">Your data is private and secure</div>
<div class="a" style="left:809.2px;top:276.2px;width:449.3px;height:338.3px;border:1px solid #dcdcdc;border-radius:6px;background:#fff"></div>
<div class="t " style="letter-spacing:-0.391px;left:818.40px;top:287.07px;font-size:9.60px;color:#1e1e1e;font-weight:bold;">Modify to remain ‘firm’ except that Seller may request a price increase if raw material costs rise by</div>
<div class="t " style="letter-spacing:-0.351px;left:818.40px;top:301.17px;font-size:9.60px;color:#1e1e1e;font-weight:bold;">more than 15% over a rolling 6-month period, evidenced by third-party indices, with Buyer's approval</div>
<div class="t " style="letter-spacing:-0.354px;left:818.40px;top:315.27px;font-size:9.60px;color:#1e1e1e;font-weight:bold;">not to be unreasonably withheld.</div>
<div class="t " style="letter-spacing:-0.223px;left:818.40px;top:337.87px;font-size:9.60px;color:#1c1c1c;-webkit-text-stroke:.25px;">Price. [Subject to Section 8.02,] Seller shall provide Goods to Buyer for the prices set forth in Schedule 2</div>
<div class="t " style="letter-spacing:-0.195px;left:818.40px;top:352.47px;font-size:9.60px;color:#1c1c1c;-webkit-text-stroke:.25px;">attached hereto (the "Prices"). All Prices include, and Seller is solely responsible for, all costs and</div>
<div class="t " style="letter-spacing:-0.146px;left:818.40px;top:367.07px;font-size:9.60px;color:#1c1c1c;-webkit-text-stroke:.25px;">expenses relating to packing, crating, boxing, transporting, loading and unloading, customs, tariffs and</div>
<div class="t " style="letter-spacing:-0.086px;left:818.40px;top:381.67px;font-size:9.60px;color:#1c1c1c;-webkit-text-stroke:.25px;">duties, insurance, and any other similar financial contributions or obligations relating to the production,</div>
<div class="t " style="letter-spacing:-0.210px;left:818.40px;top:396.27px;font-size:9.60px;color:#1c1c1c;-webkit-text-stroke:.25px;">manufacture, sale, and delivery of the Goods. All Prices are firm and are not subject to increase for any</div>
<div class="t " style="letter-spacing:-0.151px;left:818.40px;top:410.87px;font-size:9.60px;color:#1c1c1c;-webkit-text-stroke:.25px;">reason, including changes in market conditions, increases in raw material, component, labour, or</div>
<div class="t " style="letter-spacing:-0.146px;left:818.40px;top:425.47px;font-size:9.60px;color:#1c1c1c;-webkit-text-stroke:.25px;">overhead costs, or because of labour disruptions<span style="color:#2e7d32">[</span>, changes in program timing or length,<span style="color:#2e7d32">]</span> or fluctuations in</div>
<div class="t " style="letter-spacing:-0.199px;left:818.40px;top:440.07px;font-size:9.60px;color:#1c1c1c;-webkit-text-stroke:.25px;">production volumes<span style="color:#2e7d32;text-decoration:underline;text-decoration-color:#2e7d32">, except that Seller may request a price increase if raw material costs rise by more</span></div>
<div class="t " style="letter-spacing:-0.141px;left:818.40px;top:454.67px;font-size:9.60px;color:#1c1c1c;-webkit-text-stroke:.25px;"><span style="color:#2e7d32;text-decoration:underline;text-decoration-color:#2e7d32">than 15% over a rolling 6-month period, evidenced by third-party indices, with Buyer's approval not to be</span></div>
<div class="t " style="letter-spacing:-0.074px;left:818.40px;top:469.27px;font-size:9.60px;color:#1c1c1c;-webkit-text-stroke:.25px;"><span style="color:#2e7d32;text-decoration:underline;text-decoration-color:#2e7d32">unreasonably withheld</span>.</div>
<div class="a" style="left:818.4px;top:491px;width:430.4px;height:1px;background:#e3e3e3"></div>
<div class="t " style="letter-spacing:-0.652px;left:818.40px;top:501.92px;font-size:8.60px;color:#1e1e1e;font-weight:bold;">Explanation</div>
<div class="t " style="letter-spacing:-0.137px;left:818.40px;top:522.86px;font-size:8.20px;color:#222;-webkit-text-stroke:.2px;">Modified the pricing clause to allow for a price increase if raw material costs rise by more than 15% over a rolling 6-month</div>
<div class="t " style="letter-spacing:-0.105px;left:818.40px;top:534.21px;font-size:8.20px;color:#222;-webkit-text-stroke:.2px;">period, with evidence from third-party indices and Buyer's approval not to be unreasonably withheld. This change</div>
<div class="t " style="letter-spacing:-0.113px;left:818.40px;top:545.56px;font-size:8.20px;color:#222;-webkit-text-stroke:.2px;">introduces a specific condition under which the previously firm prices can be adjusted.</div>
<svg class="a" style="left:824.5px;top:587px;" width="11" height="13" viewBox="0 0 11 13"><path d="M5.5 12.3C3 9.5 1 7.3 1 5a4.5 4.5 0 0 1 9 0c0 2.3-2 4.5-4.5 7.3z" fill="none" stroke="#444" stroke-width="1"/><circle cx="5.5" cy="5" r="1.6" fill="none" stroke="#444" stroke-width="1"/></svg>
<svg class="a" style="left:855.5px;top:587px;" width="12" height="13" viewBox="0 0 12 13"><rect x="3.5" y=".6" width="7.8" height="9.4" rx="1" fill="none" stroke="#444" stroke-width="1"/><path d="M3.5 3.2H1.8a1 1 0 0 0-1 1V12a1 1 0 0 0 1 1h6a1 1 0 0 0 1-1v-2" fill="none" stroke="#444" stroke-width="1"/></svg>
<svg class="a" style="left:885.5px;top:586.8px;" width="13" height="13" viewBox="0 0 13 13"><path d="M2.8 5.5V1h5.5l3 3v8.3H2.8V9.5" fill="none" stroke="#444" stroke-width="1"/><path d="M.3 7.5h5.2M4 5.7l2 1.8-2 1.8" fill="none" stroke="#444" stroke-width="1"/></svg>
<svg class="a" style="left:1189.3px;top:587px;" width="13.2" height="13.2" viewBox="0 0 13.2 13.2"><circle cx="6.6" cy="6.6" r="6.6" fill="#2e7d32"/><path d="M3.6 6.8l2 2 4-4.2" fill="none" stroke="#fff" stroke-width="1.4"/></svg>
<div class="t " style="letter-spacing:-0.790px;left:1205.40px;top:588.59px;font-size:11.00px;color:#2e7d32;font-weight:bold;">Accepted</div>
<div class="a" style="left:0px;top:696.3px;width:752px;height:11px;background:#efefef"></div>
<div class="a" style="left:752px;top:125px;width:2px;height:572px;background:#e0e0e0"></div>
<div class="a" style="left:0px;top:124.5px;width:1276px;height:1.5px;background:linear-gradient(#dedede,#f4f4f4)"></div>
<div class="a" style="left:0px;top:707px;width:1280px;height:15px;background:#f3f3f3"></div>
<div class="t " style="letter-spacing:-0.199px;left:5.90px;top:713.26px;font-size:8.20px;color:#3a3a3a;">13314 words</div>
<svg class="a" style="left:64.5px;top:711.3px;" width="10" height="10" viewBox="0 0 10 10"><path d="M.5 .5h6.5v4M.5 .5v8h3" fill="none" stroke="#555" stroke-width=".8"/><path d="M3.5 6l2 2 3.5-4" fill="none" stroke="#555" stroke-width=".9"/><path d="M5.5 3.5l4 4" stroke="#555" stroke-width=".8"/></svg>
<div class="t " style="letter-spacing:-0.231px;left:87.10px;top:713.26px;font-size:8.20px;color:#3a3a3a;">English (Canada)</div>
<div class="t " style="letter-spacing:-0.114px;left:180.90px;top:713.26px;font-size:8.20px;color:#3a3a3a;">Text Predictions: On</div>
<svg class="a" style="left:266.5px;top:711px;" width="10.5" height="11" viewBox="0 0 10.5 11"><circle cx="5.2" cy="1.8" r="1.2" fill="none" stroke="#555" stroke-width=".8"/><path d="M1 3.8h8.5M5.2 4v3.5L3 10.5M5.2 7.5l2.2 3" fill="none" stroke="#555" stroke-width=".8"/><path d="M1 6.5l8.5 3.5M9.5 6.5L1 10" stroke="#555" stroke-width=".6"/></svg>
<div class="t " style="letter-spacing:-0.114px;left:279.30px;top:713.26px;font-size:8.20px;color:#3a3a3a;">Accessibility: Investigate</div>
<svg class="a" style="left:947.8px;top:711px;" width="12" height="10.5" viewBox="0 0 12 10.5"><rect x=".5" y=".5" width="10.5" height="7" rx=".8" fill="none" stroke="#444" stroke-width=".9"/><path d="M3.5 10h4.5M5.8 7.5V10" stroke="#444" stroke-width=".9"/><rect x="6.5" y="3.8" width="4" height="6" fill="#444"/></svg>
<div class="t " style="letter-spacing:-0.268px;left:961.00px;top:713.02px;font-size:8.60px;color:#3a3a3a;">Display Settings</div>
<svg class="a" style="left:1029.8px;top:711px;" width="10.5" height="10.5" viewBox="0 0 10.5 10.5"><path d="M.5 3V.5H3M7.5.5H10V3M10 7.5V10H7.5M3 10H.5V7.5" fill="none" stroke="#444" stroke-width=".9"/><path d="M3 2.5h3.5l1.5 1.5v4H3z" fill="none" stroke="#444" stroke-width=".8"/></svg>
<div class="t " style="letter-spacing:-0.502px;left:1042.00px;top:713.02px;font-size:8.60px;color:#3a3a3a;">Focus</div>
<svg class="a" style="left:1080.8px;top:711px;" width="10.5" height="10" viewBox="0 0 10.5 10"><path d="M.5 1.5h3.5a1.3 1.3 0 0 1 1.3 1.3V9.5a1.3 1.3 0 0 0-1.3-1.3H.5zM10 1.5H6.5a1.3 1.3 0 0 0-1.3 1.3V9.5a1.3 1.3 0 0 1 1.3-1.3H10z" fill="none" stroke="#444" stroke-width=".9"/></svg>
<div class="a" style="left:1100px;top:709px;width:27.7px;height:13px;background:#dedede"></div>
<svg class="a" style="left:1109.5px;top:710.5px;" width="8" height="11" viewBox="0 0 8 11"><rect x=".5" y=".5" width="7" height="10" fill="none" stroke="#333" stroke-width=".9"/><path d="M2 3h4M2 5h4M2 7h4" stroke="#333" stroke-width=".8"/></svg>
<svg class="a" style="left:1136.3px;top:710.8px;" width="11" height="11" viewBox="0 0 11 11"><rect x=".5" y=".5" width="9" height="9" fill="none" stroke="#444" stroke-width=".9"/><path d="M.5 3h9M2.5 5h4M2.5 7h3" stroke="#444" stroke-width=".8"/><circle cx="8" cy="8" r="2.3" fill="#fff" stroke="#444" stroke-width=".8"/></svg>
<div class="a" style="left:1160.2px;top:715.8px;width:5px;height:1px;background:#444"></div>
<div class="a" style="left:1169px;top:716px;width:69.7px;height:1px;background:#8a8a8a"></div>
<div class="a" style="left:1207.3px;top:711.5px;width:2.8px;height:9.5px;background:#555"></div>
<div class="a" style="left:1242.5px;top:715.8px;width:5px;height:1px;background:#444"></div>
<div class="a" style="left:1244.5px;top:713.8px;width:1px;height:5px;background:#444"></div>
<div class="t " style="letter-spacing:-0.851px;left:1257.80px;top:713.36px;font-size:8.20px;color:#3a3a3a;">140%</div>
</body></html>
